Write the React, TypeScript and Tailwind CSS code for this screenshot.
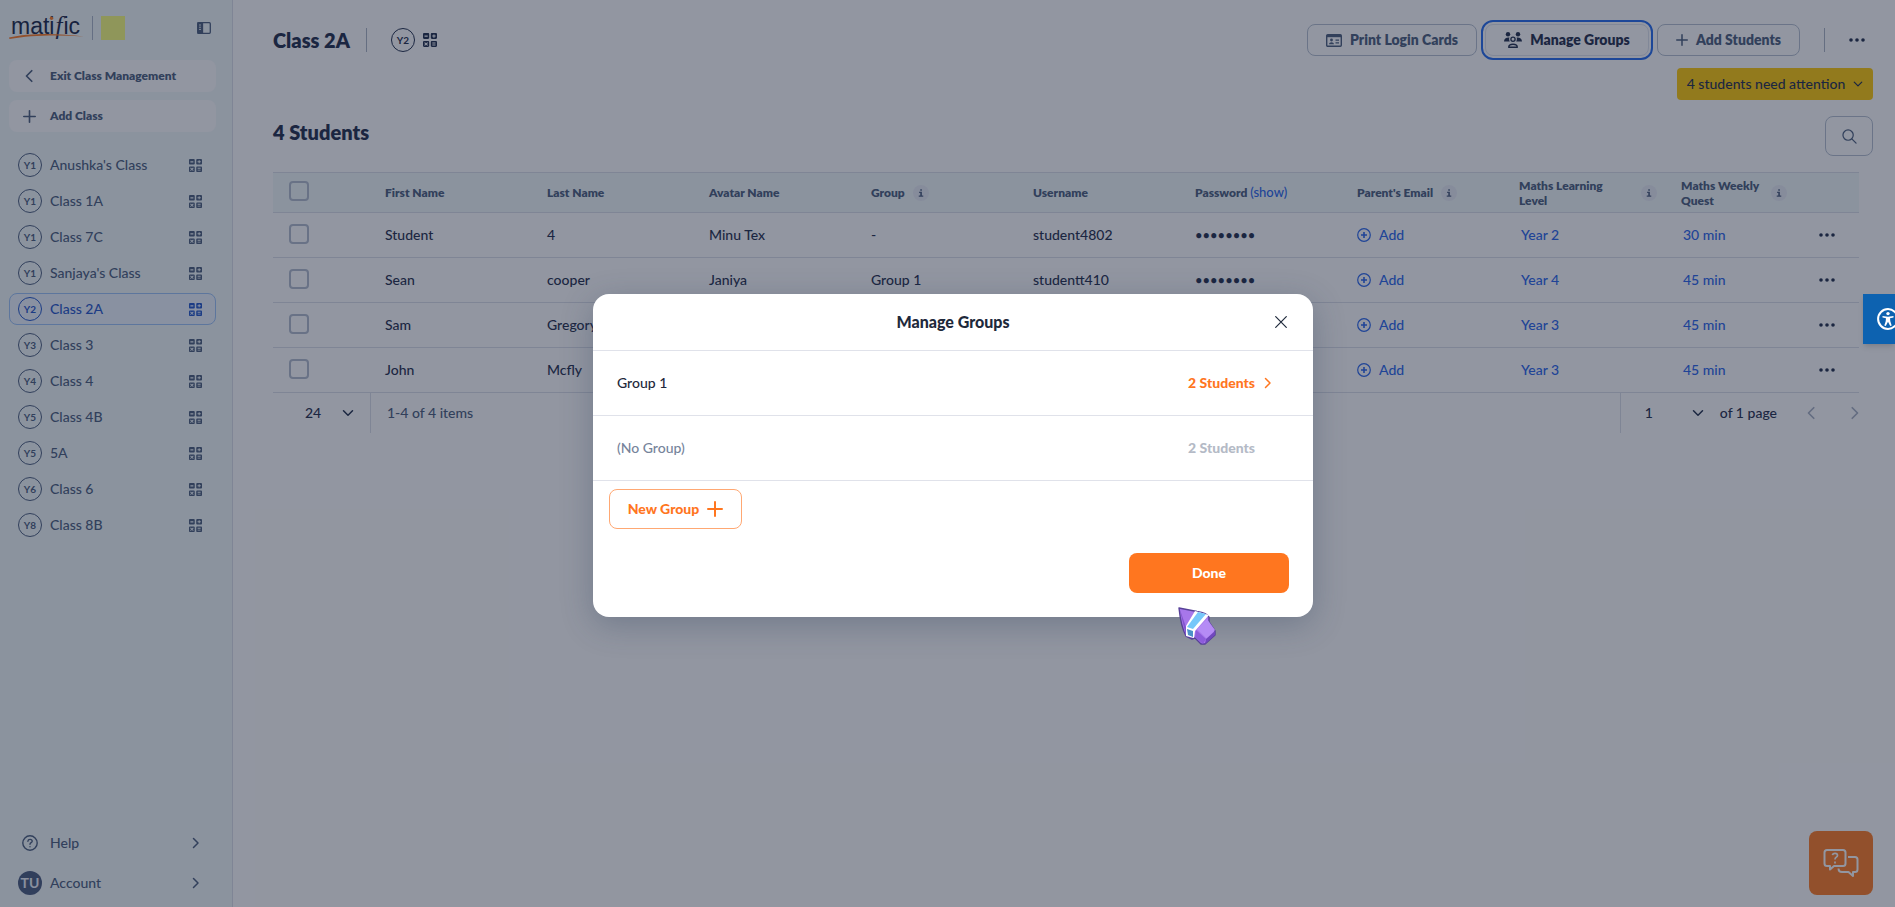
import React from 'react';

type IconProps = { className?: string };

function SubjectIcon({ className = 'size-[13px]' }: IconProps) {
  return (
    <svg viewBox="0 0 14 14" className={className} fill="currentColor" aria-hidden="true">
      <path fillRule="evenodd" d="M1.2 0h3.800c.7 0 1.200.5 1.200 1.200v3.600c0 .7-.5 1.200-1.200 1.200H1.200C.5 6 0 5.500 0 4.800V1.200C0 .5.5 0 1.200 0Zm.3 2.500v1.200h3.200V2.500Z" />
      <path fillRule="evenodd" d="M9 0h3.800c.7 0 1.200.5 1.200 1.200v3.600c0 .7-.5 1.200-1.200 1.200H9c-.7 0-1.200-.5-1.200-1.200V1.200C7.800.5 8.300 0 9 0Zm1.400 1.400v1.100H9.200v1.100h1.200v1.100h1.100V3.600h1.200V2.500h-1.200V1.400Z" />
      <path fillRule="evenodd" d="M1.200 8h3.800c.7 0 1.200.5 1.200 1.200v3.600c0 .7-.5 1.200-1.200 1.200H1.200C.5 14 0 13.500 0 12.800V9.200C0 8.500.5 8 1.200 8Zm.7 1.200-.7.7 1.200 1.100-1.200 1.100.7.7 1.200-1.100 1.200 1.100.7-.7L3.800 11l1.300-1.100-.7-.7-1.300 1.100Z" />
      <path fillRule="evenodd" d="M9 8h3.800c.7 0 1.200.5 1.200 1.200v3.600c0 .7-.5 1.200-1.200 1.200H9c-.7 0-1.200-.5-1.200-1.200V9.200C7.800 8.500 8.300 8 9 8Zm.3 1.500v1h3.200v-1Zm0 2v1h3.200v-1Z" />
    </svg>
  );
}

function Chevron({ dir, className = '' }: { dir: 'left' | 'right' | 'down'; className?: string }) {
  const d = { left: 'M10 2 4 8l6 6', right: 'M6 2l6 6-6 6', down: 'M2 5l6 6 6-6' }[dir];
  return (
    <svg viewBox="0 0 16 16" className={className} fill="none" stroke="currentColor" strokeWidth="2" strokeLinecap="round" strokeLinejoin="round" aria-hidden="true">
      <path d={d} />
    </svg>
  );
}

function Plus({ className = '' }: IconProps) {
  return (
    <svg viewBox="0 0 16 16" className={className} fill="none" stroke="currentColor" strokeWidth="2" strokeLinecap="round" aria-hidden="true">
      <path d="M8 1v14M1 8h14" />
    </svg>
  );
}

function Dots() {
  return (
    <svg viewBox="0 0 16 4" className="h-1 w-4" fill="currentColor" aria-hidden="true">
      <circle cx="2" cy="2" r="1.800" />
      <circle cx="8" cy="2" r="1.800" />
      <circle cx="14" cy="2" r="1.800" />
    </svg>
  );
}

function YearBadge({ children }: { children: React.ReactNode }) {
  return (
    <span className="flex size-6 shrink-0 items-center justify-center rounded-full border border-current text-[10px] font-bold">
      {children}
    </span>
  );
}

function Info() {
  return (
    <button type="button" aria-label="More information" className="flex size-4 shrink-0 items-center justify-center rounded-full bg-[#e8ebf4]">
      <svg viewBox="0 0 8 10" className="h-2 w-1.5" fill="currentColor" aria-hidden="true">
        <path d="M3 0h2.200v2H3ZM1.500 3.400h3.700v4.900H7V10H1V8.300h2V5H1.500Z" />
      </svg>
    </button>
  );
}

function Logo() {
  return (
    <a href="#home" aria-label="matific" className="relative block h-6 w-[75px] text-[#152443]">
      <span className="block pl-0.5 font-['Liberation_Sans',sans-serif] text-[23px] leading-5 whitespace-nowrap">
        mati<span className="px-px font-['Liberation_Serif',serif] text-[25px] italic">f</span>ic
      </span>
      <svg viewBox="0 0 75 24" className="absolute inset-0 h-6 w-[75px]" aria-hidden="true">
        <path d="M0 21.500C20 17 50 17 75 20.500 50 18.800 22 19 .5 23Z" fill="#ff7a1f" />
        <circle cx="42.500" cy="2.200" r="1.700" fill="#ff7a1f" />
      </svg>
    </a>
  );
}

const classes = [
  ['Y1', "Anushka's Class"],
  ['Y1', 'Class 1A'],
  ['Y1', 'Class 7C'],
  ['Y1', "Sanjaya's Class"],
  ['Y2', 'Class 2A'],
  ['Y3', 'Class 3'],
  ['Y4', 'Class 4'],
  ['Y5', 'Class 4B'],
  ['Y5', '5A'],
  ['Y6', 'Class 6'],
  ['Y8', 'Class 8B'],
];

function Sidebar() {
  return (
    <aside className="flex w-[233px] shrink-0 flex-col border-r border-[#dadfe9] bg-[#f2f9fa] text-[#475b7a]">
      <div className="flex items-center pt-4 pr-[21px] pl-[9px]">
        <Logo />
        <span className="ml-2 h-6 w-px bg-[#a9b4c6]" />
        <span className="ml-2 size-6 bg-[#faff78]" />
        <button type="button" aria-label="Collapse sidebar" className="ml-auto">
          <svg viewBox="0 0 14 12" className="h-3 w-[14px]" fill="none" stroke="currentColor" strokeWidth="1.300" aria-hidden="true">
            <rect x=".7" y=".7" width="12.600" height="10.600" rx="1" />
            <path d="M1 1h4.500v10H1Z" fill="currentColor" />
            <path d="M2 3h2M2 5.200h2M2 7.400h2" stroke="#f2f9fa" strokeWidth=".9" />
          </svg>
        </button>
      </div>
      <div className="mt-5 flex flex-col gap-2 pr-4 pl-[9px] text-xs font-extrabold">
        <button type="button" className="flex h-8 items-center rounded-lg bg-white">
          <span className="flex w-[41px] justify-center"><Chevron dir="left" className="size-[14px]" /></span>
          Exit Class Management
        </button>
        <button type="button" className="flex h-8 items-center rounded-lg bg-white">
          <span className="flex w-[41px] justify-center"><Plus className="size-[13px]" /></span>
          Add Class
        </button>
      </div>
      <nav className="mt-[17px] flex flex-col gap-1 pr-4 pl-[9px] text-sm font-medium">
        {classes.map(([year, name]) => (
          <a
            key={name}
            href="#class"
            className={
              name === 'Class 2A'
                ? 'flex h-8 items-center rounded-lg border border-[#99c2f7] bg-[#edf5ff] px-2 text-[#1d54c9]'
                : 'flex h-8 items-center rounded-lg border border-transparent px-2'
            }
          >
            <YearBadge>{year}</YearBadge>
            <span className="ml-2 flex-1">{name}</span>
            <SubjectIcon className="mr-[5px] size-[13px]" />
          </a>
        ))}
      </nav>
      <div className="mt-auto flex flex-col gap-2 pr-4 pb-2 pl-[9px] text-sm font-medium">
        <a href="#help" className="flex h-8 items-center pr-[15px] pl-[9px]">
          <span className="flex w-6 justify-center">
            <svg viewBox="0 0 16 16" className="size-4" fill="none" stroke="currentColor" strokeWidth="1.400" strokeLinecap="round" aria-hidden="true">
              <circle cx="8" cy="8" r="7.200" />
              <path d="M5.900 6.200c.2-2.500 4.300-2.400 4.300 0 0 1.500-2.200 1.500-2.200 3M8 11.600v.1" />
            </svg>
          </span>
          <span className="ml-2 flex-1">Help</span>
          <Chevron dir="right" className="size-3" />
        </a>
        <a href="#account" className="flex h-8 items-center pr-[15px] pl-[9px]">
          <span className="flex size-6 items-center justify-center rounded-full bg-[#46587c] text-sm font-bold text-[#eef2fa]">TU</span>
          <span className="ml-2 flex-1">Account</span>
          <Chevron dir="right" className="size-3" />
        </a>
      </div>
    </aside>
  );
}

function Toolbar() {
  const btn = 'flex h-8 items-center rounded-lg border text-sm font-extrabold';
  return (
    <div className="flex items-center pr-2">
      <h1 className="text-xl font-extrabold">Class 2A</h1>
      <span className="ml-4 h-6 w-px bg-[#aab3c2]" />
      <span className="ml-6"><YearBadge>Y2</YearBadge></span>
      <SubjectIcon className="ml-2 size-[14px]" />
      <div className="ml-auto flex gap-2">
        <button type="button" className={`${btn} w-[170px] justify-center gap-2 border-[#b4bfcf] text-[#475b7a]`}>
          <svg viewBox="0 0 16 13" className="h-[13px] w-4" aria-hidden="true">
            <rect x=".7" y=".7" width="14.600" height="11.600" rx="1" fill="none" stroke="currentColor" strokeWidth="1.400" />
            <path d="M1 1h14v2.200H1Z" fill="currentColor" />
            <circle cx="5.500" cy="6" r="1.400" fill="currentColor" />
            <path d="M3 10.300c0-2.800 5-2.800 5 0ZM9.500 5.500H13v1.200H9.500ZM9.500 8.300H13v1.200H9.500Z" fill="currentColor" />
          </svg>
          Print Login Cards
        </button>
        <button type="button" className={`${btn} w-[164px] justify-center gap-2 border-[#dfe4ee] outline-2 outline-offset-2 outline-[#1f68ee]`}>
          <svg viewBox="0 0 18 16" className="h-4 w-[18px]" fill="currentColor" aria-hidden="true">
            <circle cx="4" cy="2.200" r="2.200" />
            <circle cx="14" cy="2.200" r="2.200" />
            <path d="M0 9.500C0 6.300 2.500 5.200 5.400 5.500c-.6 1.500-.3 2.800.4 4ZM18 9.500c0-3.200-2.500-4.300-5.400-4 .6 1.500.3 2.800-.4 4Z" />
            <circle cx="9" cy="7.200" r="2.100" fill="none" stroke="currentColor" strokeWidth="1.300" />
            <path d="M4.700 15.200c.2-4 8.400-4 8.600 0Z" fill="none" stroke="currentColor" strokeWidth="1.400" strokeLinejoin="round" />
          </svg>
          Manage Groups
        </button>
        <button type="button" className={`${btn} w-[143px] justify-center gap-2 border-[#b4bfcf] text-[#475b7a]`}>
          <Plus className="size-3" />
          Add Students
        </button>
      </div>
      <span className="ml-6 h-6 w-px bg-[#aab3c2]" />
      <button type="button" aria-label="More actions" className="ml-6"><Dots /></button>
    </div>
  );
}

const students = [
  ['Student', '4', 'Minu Tex', '-', 'student4802', 'Year 2', '30 min'],
  ['Sean', 'cooper', 'Janiya', 'Group 1', 'studentt410', 'Year 4', '45 min'],
  ['Sam', 'Gregory', '', '', '', 'Year 3', '45 min'],
  ['John', 'Mcfly', '', '', '', 'Year 3', '45 min'],
];

function Check({ label }: { label: string }) {
  return (
    <input type="checkbox" aria-label={label} className="block size-5 appearance-none rounded border-2 border-[#b0bbcc]" />
  );
}

function StudentsTable() {
  const th = 'pl-4 text-left font-extrabold';
  return (
    <table className="w-full table-fixed border-collapse text-sm font-medium">
      <colgroup>
        <col className="w-24" />
        <col /><col /><col /><col /><col /><col /><col /><col />
        <col className="w-[130px]" />
        <col className="w-16" />
      </colgroup>
      <thead className="bg-[#f2f9fa] text-xs text-[#475b7a]">
        <tr className="h-10 border-y border-[#dadfe9]">
          <th className="pb-1 pl-4 font-normal"><Check label="Select all students" /></th>
          <th className={th}>First Name</th>
          <th className={th}>Last Name</th>
          <th className={th}>Avatar Name</th>
          <th className={th}><span className="flex items-center gap-2">Group <Info /></span></th>
          <th className={th}>Username</th>
          <th className={th}>Password <a href="#show" className="text-[13px] font-medium text-[#2563eb]">(show)</a></th>
          <th className={th}><span className="flex items-center gap-2">Parent's Email <Info /></span></th>
          <th className={`${th} pr-2`}><span className="flex items-center justify-between leading-[15px]"><span className="w-24">Maths Learning Level</span><Info /></span></th>
          <th className={`${th} pr-2`}><span className="flex items-center justify-between leading-[15px]"><span className="w-[84px]">Maths Weekly Quest</span><Info /></span></th>
          <td />
        </tr>
      </thead>
      <tbody>
        {students.map(([first, last, avatar, group, user, level, quest]) => (
          <tr key={first} className="h-[45px] border-b border-[#dadfe9]">
            <td className="pb-0.5 pl-4"><Check label={`Select ${first}`} /></td>
            <td className="pl-4">{first}</td>
            <td className="pl-4">{last}</td>
            <td className="pl-4">{avatar}</td>
            <td className="pl-4">{group}</td>
            <td className="pl-4">{user}</td>
            <td className="pl-4 text-[13px]">{user && '••••••••'}</td>
            <td className="pl-4">
              <button type="button" className="flex items-center gap-2 text-[#2563eb]">
                <svg viewBox="0 0 14 14" className="size-[14px]" fill="none" stroke="currentColor" strokeWidth="1.200" aria-hidden="true">
                  <circle cx="7" cy="7" r="6.300" />
                  <path d="M7 4v6M4 7h6" strokeWidth="1.600" />
                </svg>
                Add
              </button>
            </td>
            <td className="pl-[18px]"><a href="#level" className="text-[#2563eb]">{level}</a></td>
            <td className="pl-[18px]"><a href="#quest" className="text-[#2563eb]">{quest}</a></td>
            <td><button type="button" aria-label={`Actions for ${first}`} className="mx-auto block"><Dots /></button></td>
          </tr>
        ))}
      </tbody>
    </table>
  );
}

function Pager() {
  return (
    <div className="flex h-10 items-center text-sm font-medium">
      <div className="relative flex h-10 w-[98px] items-center border-r border-[#dadfe9]">
        <select aria-label="Items per page" className="h-10 w-full appearance-none bg-transparent pl-8"><option>24</option></select>
        <Chevron dir="down" className="pointer-events-none absolute right-4 size-3" />
      </div>
      <span className="ml-4 text-[#475b7a]">1-4 of 4 items</span>
      <div className="relative ml-auto flex h-10 w-[84px] items-center border-l border-[#dadfe9]">
        <select aria-label="Page" className="h-10 w-full appearance-none bg-transparent pl-6"><option>1</option></select>
        <Chevron dir="down" className="pointer-events-none absolute right-0 size-3" />
      </div>
      <span className="ml-4">of 1 page</span>
      <button type="button" aria-label="Previous page" disabled className="ml-7 text-[#a6b0c2]"><Chevron dir="left" className="size-[14px]" /></button>
      <button type="button" aria-label="Next page" disabled className="mr-3 ml-7 text-[#a6b0c2]"><Chevron dir="right" className="size-[14px]" /></button>
    </div>
  );
}

function ManageGroups() {
  return (
    <div role="dialog" aria-modal="true" aria-labelledby="dialog-title" className="w-[720px] rounded-2xl bg-white text-sm text-[#1e293b] shadow-[0_8px_32px_rgba(40,60,90,0.3)]">
      <div className="relative flex h-14 items-center justify-center">
        <h2 id="dialog-title" className="text-base font-black">Manage Groups</h2>
        <button type="button" aria-label="Close" className="absolute right-[26px]">
          <svg viewBox="0 0 12 12" className="size-3" fill="none" stroke="currentColor" strokeWidth="1.200" strokeLinecap="round" aria-hidden="true">
            <path d="m.7.7 10.600 10.600M11.300.7.700 11.300" />
          </svg>
        </button>
      </div>
      <ul className="border-b border-[#e0e2ea]">
        <li className="flex h-[65px] items-center border-t border-[#e0e2ea] pr-10 pl-6">
          <span className="flex-1 font-medium">Group 1</span>
          <a href="#group" className="flex items-center gap-1.5 font-black text-[#ff761f]">
            2 Students <Chevron dir="right" className="size-3" />
          </a>
        </li>
        <li className="flex h-[65px] items-center border-t border-[#e0e2ea] pr-[58px] pl-6">
          <span className="flex-1 font-medium text-[#76849b]">(No Group)</span>
          <span className="font-black text-[#b4bac6]">2 Students</span>
        </li>
      </ul>
      <div className="flex flex-col gap-6 pt-2 pr-6 pb-6 pl-4">
        <button type="button" className="flex h-10 w-[133px] items-center justify-center gap-2 rounded-lg border border-[#ffa873] font-black text-[#ff761f]">
          New Group <Plus className="size-4" />
        </button>
        <button type="button" className="h-10 w-40 self-end rounded-lg bg-[#ff761f] font-black text-white">Done</button>
      </div>
    </div>
  );
}

function Pointer() {
  return (
    <svg viewBox="0 0 38 38" className="pointer-events-none absolute top-[607px] left-[1178px] z-20 size-[38px]" aria-hidden="true">
      <path d="M1 1 19 4.500Q29 6 31 10L31 15 37 24 37 28 27 37 23 37 17 31 14 32 8 29Q3 20 1 1Z" fill="#a777ea" stroke="#574198" strokeWidth="1.400" strokeLinejoin="round" />
      <path d="M1.500 1.500 8 29 14 31 15 24 8 20Z" fill="#8355cf" />
      <path d="M17 4 31 8 17 24 16 31 8 29V19Z" fill="#fff" />
      <path d="M20 5 28 7 15 22 9 20Z" fill="#76c7fa" />
      <path d="M9 22 15 24V30L10 28Z" fill="#4c91c8" />
      <path d="M29 12 37 23 29 32 19 22Z" fill="#b58bf5" />
      <path d="M18 23 28 32 25 37 17 30Z" fill="#8d5cdb" />
      <path d="M37 24V28L27 37 28 32Z" fill="#7148be" />
    </svg>
  );
}

export default function App() {
  return (
    <div className="relative flex min-h-screen overflow-hidden bg-white font-[Lato,'Noto_Sans',sans-serif] text-[#1c2a48]">
      <Sidebar />
      <main className="min-w-0 flex-1 pt-6 pr-[22px] pl-10">
        <Toolbar />
        <div className="mt-3 flex justify-end">
          <button type="button" className="flex h-8 w-[196px] items-center justify-center gap-2 rounded bg-[#ffca02] text-sm font-medium">
            4 students need attention <Chevron dir="down" className="size-2.5" />
          </button>
        </div>
        <div className="mt-4 flex h-10 items-start justify-between">
          <h2 className="pt-0.5 text-xl font-extrabold">4 Students</h2>
          <button type="button" aria-label="Search" className="flex h-10 w-12 items-center justify-center rounded-lg border border-[#b4bfcf] text-[#475b7a]">
            <svg viewBox="0 0 16 16" className="size-[15px]" fill="none" stroke="currentColor" strokeWidth="1.300" strokeLinecap="round" aria-hidden="true">
              <circle cx="6.500" cy="6.500" r="5.500" />
              <path d="m10.500 10.500 4.500 4.500" />
            </svg>
          </button>
        </div>
        <div className="mt-4 pr-[14px]"><StudentsTable /></div>
        <Pager />
      </main>
      <button type="button" aria-label="Help chat" className="absolute right-[22px] bottom-3 flex size-16 items-center justify-center rounded-lg bg-[#ff7a1f] text-white">
        <svg viewBox="0 0 36 28" className="h-7 w-9" fill="none" stroke="currentColor" strokeWidth="2" strokeLinejoin="round" aria-hidden="true">
          <path d="M4 1h16q2.500 0 2.500 2.500v11q0 2.500-2.500 2.500h-9l-4 3.500V17H4q-2.500 0-2.500-2.500v-11Q1.500 1 4 1Z" />
          <path d="M25 8h7q2.500 0 2.500 2.500v10q0 2.500-2.500 2.500h-2v4l-4.500-4H19q-3.500 0-3.500-3.500" />
          <path d="M9.500 6.200c.3-2.500 5-2.400 5 .2 0 1.900-2.500 1.700-2.500 4M12 12.500v2" strokeWidth="1.700" />
        </svg>
      </button>
      <div className="absolute inset-0 z-10 flex items-center justify-center bg-[#1c243a]/48 pt-1 pl-[11px]">
        <ManageGroups />
      </div>
      <button type="button" aria-label="Accessibility" className="absolute top-[294px] right-0 z-20 flex h-[50px] w-8 items-center overflow-hidden bg-[#0d62b0] pl-3.5 text-white shadow-md">
        <svg viewBox="0 0 22 22" className="size-[22px] shrink-0" aria-hidden="true">
          <circle cx="11" cy="11" r="9.900" fill="none" stroke="currentColor" strokeWidth="2" />
          <circle cx="11" cy="5.600" r="1.700" fill="currentColor" />
          <path d="M5.500 8 11 8.700 16.500 8v1.500l-3.500.8.300 3 1.400 4.200-1.500.5L11 13.700 8.800 18l-1.500-.5 1.400-4.200.3-3-3.500-.8Z" fill="currentColor" />
        </svg>
      </button>
      <Pointer />
    </div>
  );
}
